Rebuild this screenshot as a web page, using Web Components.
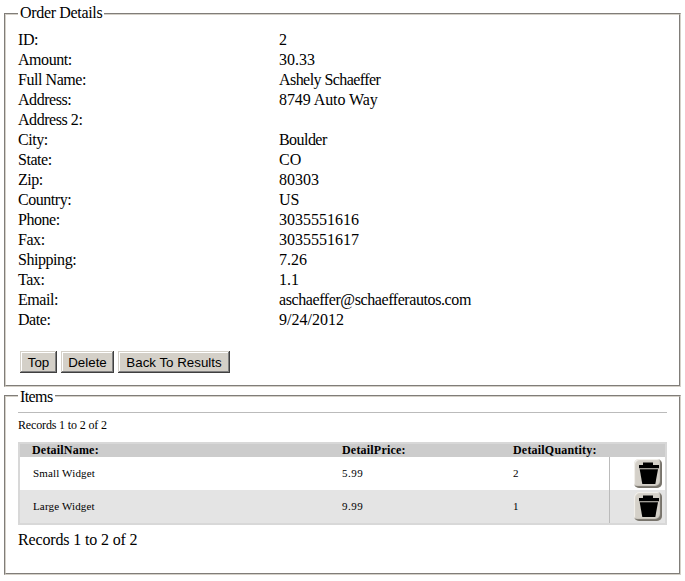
<!DOCTYPE html>
<html>
<head>
<meta charset="utf-8">
<title>Order Details</title>
<style>
    body {
        margin: 0;
        padding: 5px 4px 0;
        background: #fff;
        font-family: "Liberation Serif", serif;
        font-size: 16px;
        color: #000;
    }
</style>
</head>
<body>
<order-panel legend="Order Details">
    <detail-row label="ID:" value="2"></detail-row>
    <detail-row label="Amount:" value="30.33"></detail-row>
    <detail-row label="Full Name:" value="Ashely Schaeffer" spacing="-0.56"></detail-row>
    <detail-row label="Address:" value="8749 Auto Way" spacing="-0.08"></detail-row>
    <detail-row label="Address 2:" value=""></detail-row>
    <detail-row label="City:" value="Boulder" spacing="-0.55"></detail-row>
    <detail-row label="State:" value="CO"></detail-row>
    <detail-row label="Zip:" value="80303"></detail-row>
    <detail-row label="Country:" value="US"></detail-row>
    <detail-row label="Phone:" value="3035551616"></detail-row>
    <detail-row label="Fax:" value="3035551617"></detail-row>
    <detail-row label="Shipping:" value="7.26"></detail-row>
    <detail-row label="Tax:" value="1.1"></detail-row>
    <detail-row label="Email:" value="aschaeffer@schaefferautos.com" spacing="-0.41"></detail-row>
    <detail-row label="Date:" value="9/24/2012"></detail-row>
    <action-bar></action-bar>
</order-panel>
<items-panel></items-panel>
<script>
    class OrderPanel extends HTMLElement {
        constructor() {
            super();
            this.attachShadow({ mode: "open" });
        }

        connectedCallback() {
            this.shadowRoot.innerHTML = `
                <style>
                    :host { display: block; height: 382px; }
                    fieldset {
                        margin: 0;
                        padding: 7px 12px 0;
                        height: 100%;
                        box-sizing: border-box;
                        border: 2px groove #d4d0c8;
                    }
                    legend { padding: 0 2px 2px; line-height: 16px; letter-spacing: -0.33px; }
                </style>
                <fieldset>
                    <legend>${this.getAttribute("legend")}</legend>
                    <slot></slot>
                </fieldset>
            `;
        }
    }

    class DetailRow extends HTMLElement {
        constructor() {
            super();
            this.attachShadow({ mode: "open" });
        }

        connectedCallback() {
            const spacing = this.getAttribute("spacing") || "0";

            this.shadowRoot.innerHTML = `
                <style>
                    :host {
                        display: grid;
                        grid-template-columns: 261px 1fr;
                        height: 20px;
                        line-height: 20px;
                    }
                    .label { letter-spacing: -0.45px; }
                    .value { letter-spacing: ${spacing}px; }
                </style>
                <span class="label">${this.getAttribute("label")}</span>
                <span class="value">${this.getAttribute("value")}</span>
            `;
        }
    }

    class ActionBar extends HTMLElement {
        constructor() {
            super();
            this.attachShadow({ mode: "open" });
        }

        connectedCallback() {
            this.shadowRoot.innerHTML = `
                <style>
                    :host { display: flex; gap: 4px; padding: 21px 0 0 2px; }
                    button {
                        height: 22px;
                        padding: 0;
                        font: 13.333px "Liberation Sans", sans-serif;
                        color: #000;
                        background: #d4d0c8;
                        border: 0;
                        box-shadow:
                            inset -1px -1px #404040,
                            inset 1px 1px #d4d0c8,
                            inset -2px -2px #808080,
                            inset 2px 2px #fff;
                    }
                </style>
                <button style="width: 37px">Top</button>
                <button style="width: 53px">Delete</button>
                <button style="width: 112px">Back To Results</button>
            `;
        }
    }

    class TrashButton extends HTMLElement {
        constructor() {
            super();
            this.attachShadow({ mode: "open" });
        }

        connectedCallback() {
            this.shadowRoot.innerHTML = `
                <style>
                    :host {
                        display: block;
                        width: 28px;
                        height: 29px;
                        background: #d4d0c8;
                        border-radius: 5px;
                        box-shadow: inset -2px -2px 1px #77736b, inset 1px 1px 1px #f4f2ee;
                    }
                    svg { display: block; }
                </style>
                <svg width="28" height="29" viewBox="0 0 28 29">
                    <path d="M9 3.5 h10 v2.5 h6 v3.3 h-20 v-3.3 h4 z" fill="#000"/>
                    <path d="M5.7 10.3 h18.3 l-2.7 14.7 h-13 z" fill="#000"/>
                </svg>
            `;
        }
    }

    class ItemsPanel extends HTMLElement {
        constructor() {
            super();
            this.attachShadow({ mode: "open" });
        }

        connectedCallback() {
            const items = [
                { name: "Small Widget", price: "5.99", quantity: "2" },
                { name: "Large Widget", price: "9.99", quantity: "1" }
            ];

            this.shadowRoot.innerHTML = `
                <style>
                    :host { display: block; height: 188px; }
                    fieldset {
                        margin: 0;
                        padding: 0 12px;
                        height: 100%;
                        box-sizing: border-box;
                        border: 2px groove #d4d0c8;
                    }
                    legend { padding: 2px 2px 0; line-height: 16px; letter-spacing: -0.6px; }
                    hr { margin: 7px 0 0; border: 0; border-top: 1px solid #bbb; }
                    .records { font-size: 12px; line-height: 14px; margin: 5px 0 10px; letter-spacing: -0.15px; }
                    .grid { border: 2px solid #d8d8d8; }
                    .row { display: grid; grid-template-columns: 322px 171px 96px 1fr; }
                    .head {
                        height: 13px;
                        line-height: 13px;
                        background: #ccc;
                        font-size: 12px;
                        font-weight: bold;
                        letter-spacing: 0.2px;
                    }
                    .head span:first-child { padding-left: 12px; }
                    .item span:first-child { padding-left: 13px; letter-spacing: 0.15px; }
                    .item { height: 33px; font-size: 11px; align-items: center; }
                    .item span { padding-bottom: 2px; }
                    .item .num { letter-spacing: 0.5px; }
                    .item:nth-child(odd) { background: #e4e4e4; }
                    .item .cell-action {
                        align-self: stretch;
                        display: flex;
                        align-items: center;
                        justify-content: flex-end;
                        border-left: 1px solid #bbb;
                        padding: 0 3px 0 0;
                    }
                    .footer { line-height: 20px; margin-top: 5px; letter-spacing: -0.15px; }
                </style>
                <fieldset>
                    <legend>Items</legend>
                    <hr>
                    <div class="records">Records 1 to 2 of 2</div>
                    <div class="grid">
                        <div class="row head">
                            <span>DetailName:</span>
                            <span>DetailPrice:</span>
                            <span>DetailQuantity:</span>
                            <span></span>
                        </div>
                        ${items.map((item) => `
                            <div class="row item">
                                <span>${item.name}</span>
                                <span class="num">${item.price}</span>
                                <span class="num">${item.quantity}</span>
                                <span class="cell-action"><trash-button></trash-button></span>
                            </div>
                        `).join("")}
                    </div>
                    <div class="footer">Records 1 to 2 of 2</div>
                </fieldset>
            `;
        }
    }

    customElements.define("order-panel", OrderPanel);
    customElements.define("detail-row", DetailRow);
    customElements.define("action-bar", ActionBar);
    customElements.define("trash-button", TrashButton);
    customElements.define("items-panel", ItemsPanel);
</script>
</body>
</html>
